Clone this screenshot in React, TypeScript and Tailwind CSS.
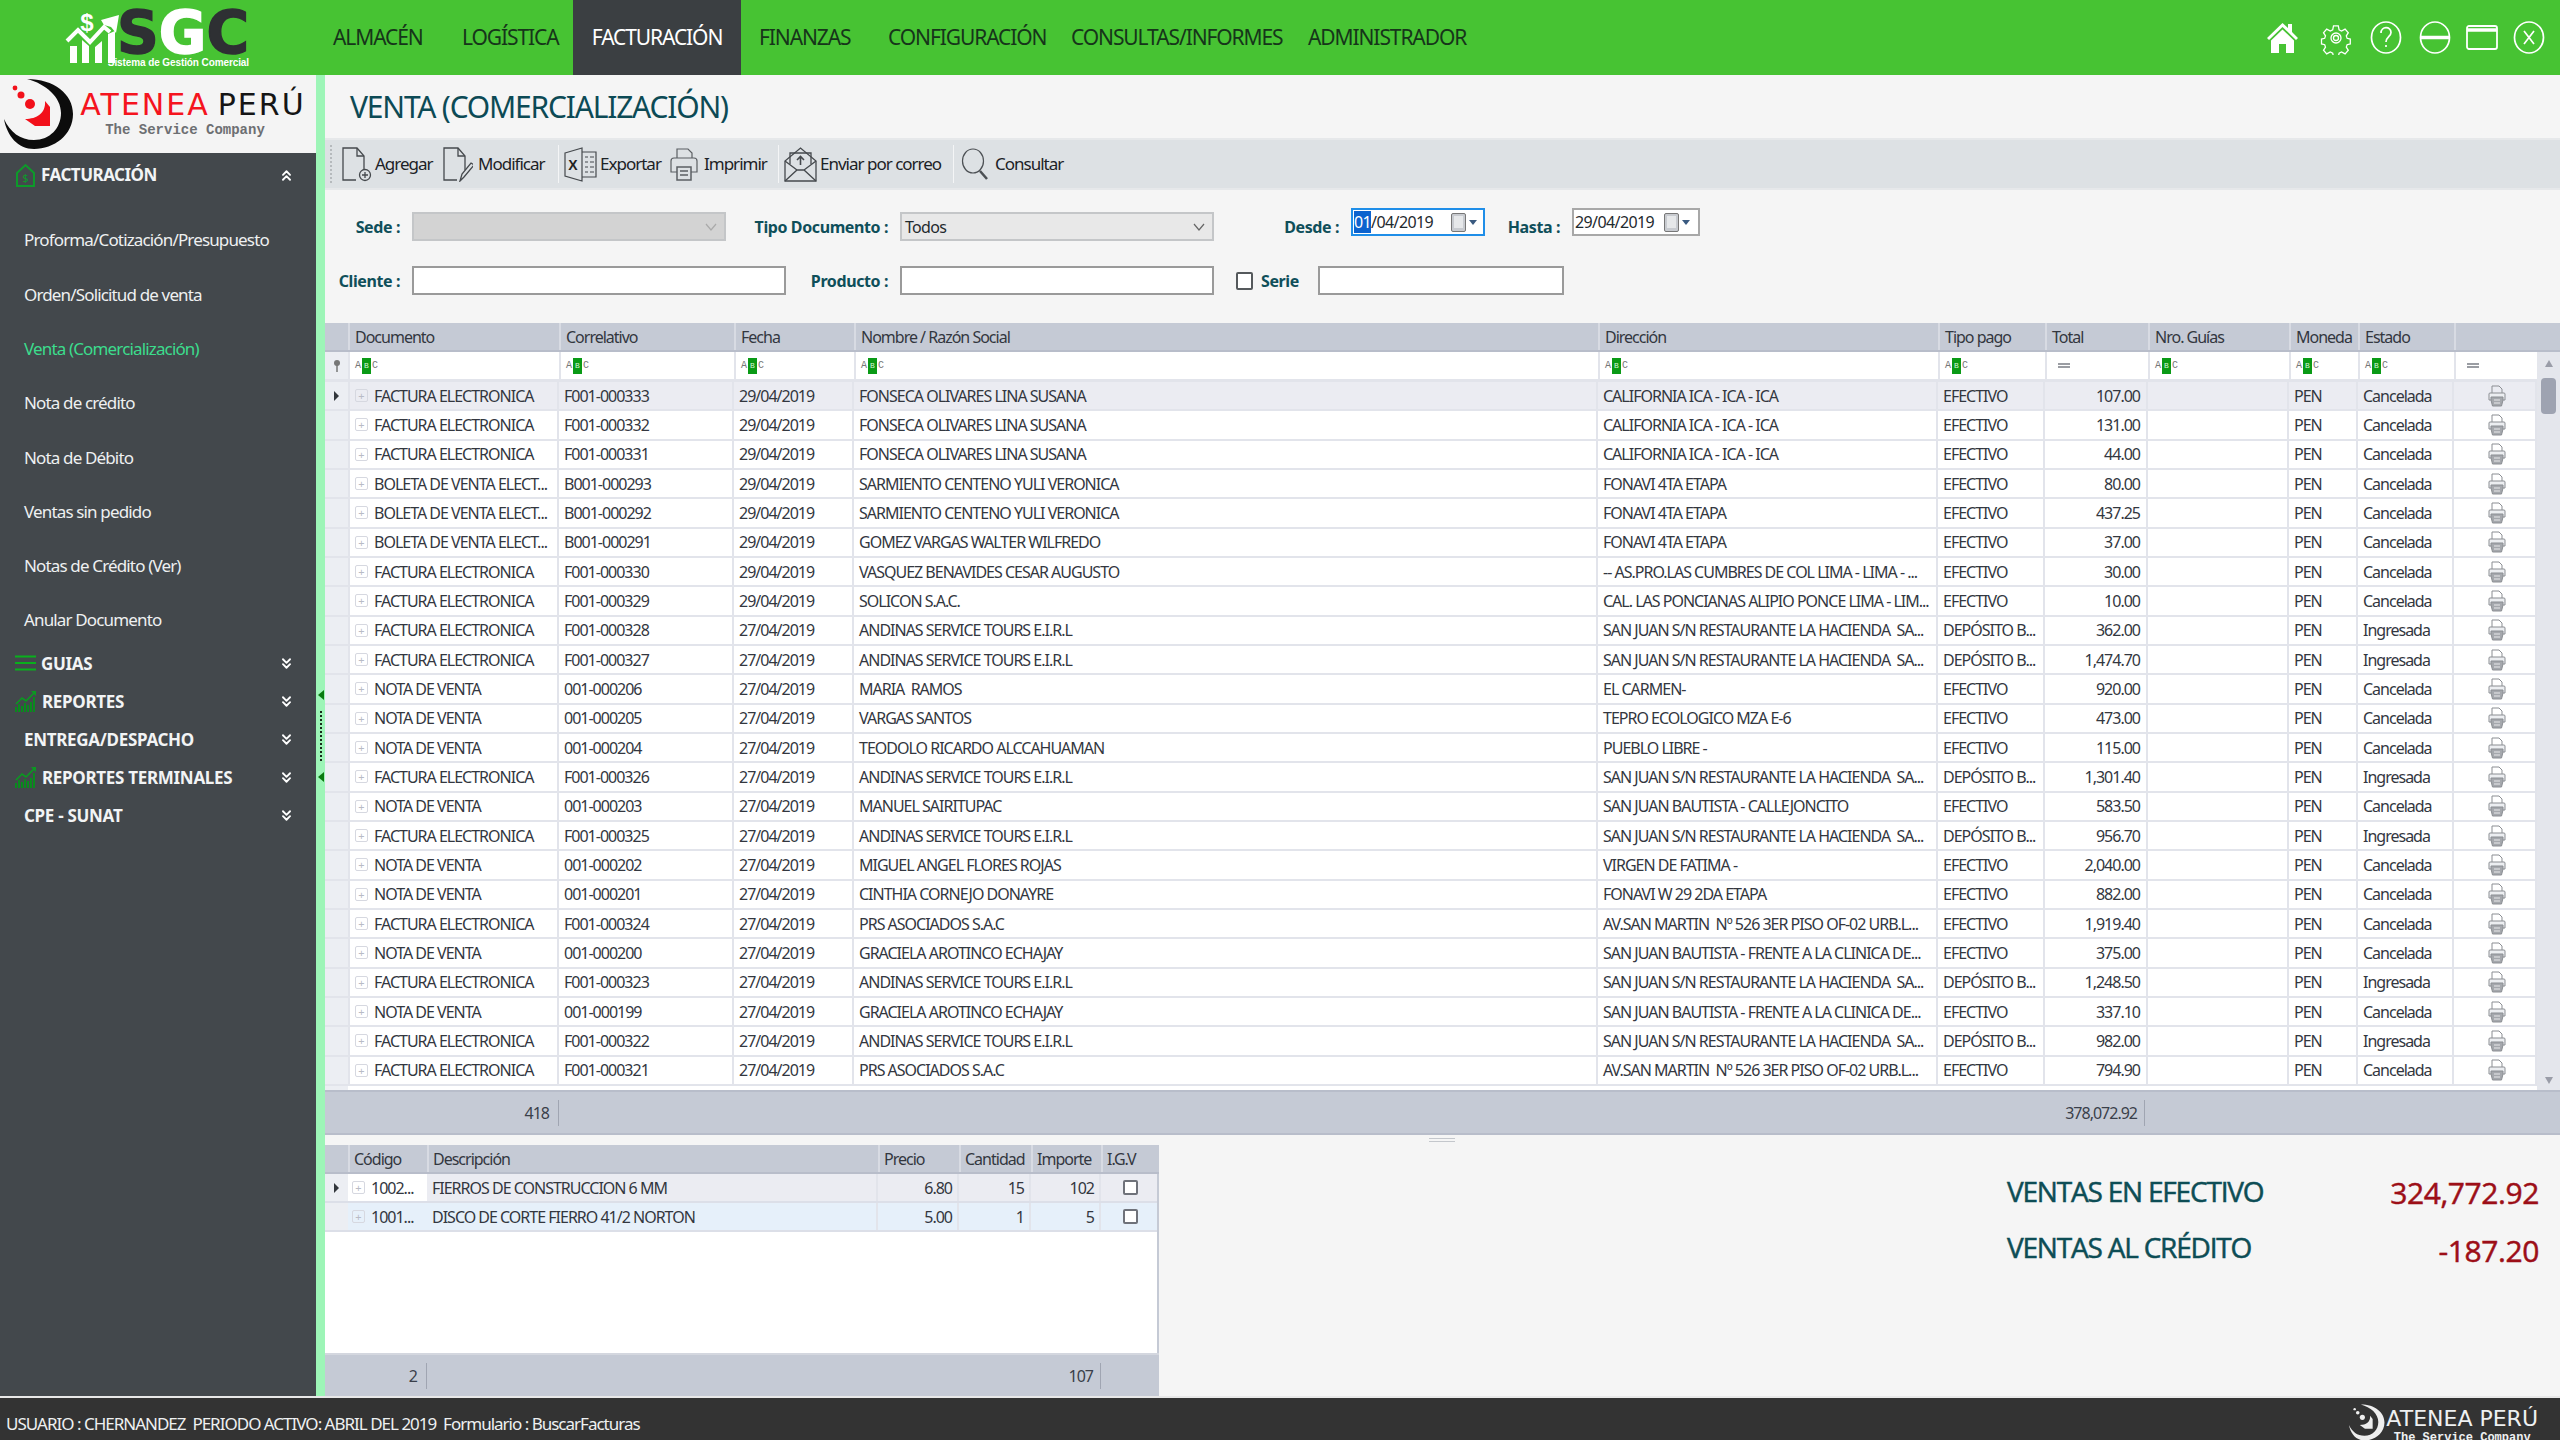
import { ChevronsDown, ChevronsUp } from "lucide-react";

const GRID_COLS =
  "grid grid-cols-[23px_211px_175px_120px_744px_340px_107px_103px_141px_69px_96px_83px]";
const DETAIL_COLS = "grid grid-cols-[23px_79px_451px_81px_72px_70px_58px]";

const FACT = "FACTURA ELECTRONICA";
const BOL = "BOLETA DE VENTA ELECT...";
const NV = "NOTA DE VENTA";
const CA = "CALIFORNIA ICA - ICA - ICA";
const FO = "FONAVI 4TA ETAPA";
const SJ = "SAN JUAN S/N RESTAURANTE LA HACIENDA  SA...";
const AND = "ANDINAS SERVICE TOURS E.I.R.L";
const AV = "AV.SAN MARTIN  Nº 526 3ER PISO OF-02 URB.L...";
const SB = "SAN JUAN BAUTISTA - FRENTE A LA CLINICA DE...";
const EF = "EFECTIVO";
const DB = "DEPÓSITO B...";

const rows = [
  [FACT, "F001-000333", "29/04/2019", "FONSECA OLIVARES LINA SUSANA", CA, EF, "107.00", "Cancelada"],
  [FACT, "F001-000332", "29/04/2019", "FONSECA OLIVARES LINA SUSANA", CA, EF, "131.00", "Cancelada"],
  [FACT, "F001-000331", "29/04/2019", "FONSECA OLIVARES LINA SUSANA", CA, EF, "44.00", "Cancelada"],
  [BOL, "B001-000293", "29/04/2019", "SARMIENTO CENTENO YULI VERONICA", FO, EF, "80.00", "Cancelada"],
  [BOL, "B001-000292", "29/04/2019", "SARMIENTO CENTENO YULI VERONICA", FO, EF, "437.25", "Cancelada"],
  [BOL, "B001-000291", "29/04/2019", "GOMEZ VARGAS WALTER WILFREDO", FO, EF, "37.00", "Cancelada"],
  [FACT, "F001-000330", "29/04/2019", "VASQUEZ BENAVIDES CESAR AUGUSTO", "-- AS.PRO.LAS CUMBRES DE COL LIMA - LIMA - ...", EF, "30.00", "Cancelada"],
  [FACT, "F001-000329", "29/04/2019", "SOLICON S.A.C.", "CAL. LAS PONCIANAS ALIPIO PONCE LIMA - LIM...", EF, "10.00", "Cancelada"],
  [FACT, "F001-000328", "27/04/2019", AND, SJ, DB, "362.00", "Ingresada"],
  [FACT, "F001-000327", "27/04/2019", AND, SJ, DB, "1,474.70", "Ingresada"],
  [NV, "001-000206", "27/04/2019", "MARIA  RAMOS", "EL CARMEN-", EF, "920.00", "Cancelada"],
  [NV, "001-000205", "27/04/2019", "VARGAS SANTOS", "TEPRO ECOLOGICO MZA E-6", EF, "473.00", "Cancelada"],
  [NV, "001-000204", "27/04/2019", "TEODOLO RICARDO ALCCAHUAMAN", "PUEBLO LIBRE -", EF, "115.00", "Cancelada"],
  [FACT, "F001-000326", "27/04/2019", AND, SJ, DB, "1,301.40", "Ingresada"],
  [NV, "001-000203", "27/04/2019", "MANUEL SAIRITUPAC", "SAN JUAN BAUTISTA - CALLEJONCITO", EF, "583.50", "Cancelada"],
  [FACT, "F001-000325", "27/04/2019", AND, SJ, DB, "956.70", "Ingresada"],
  [NV, "001-000202", "27/04/2019", "MIGUEL ANGEL FLORES ROJAS", "VIRGEN DE FATIMA -", EF, "2,040.00", "Cancelada"],
  [NV, "001-000201", "27/04/2019", "CINTHIA CORNEJO DONAYRE", "FONAVI W 29 2DA ETAPA", EF, "882.00", "Cancelada"],
  [FACT, "F001-000324", "27/04/2019", "PRS ASOCIADOS S.A.C", AV, EF, "1,919.40", "Cancelada"],
  [NV, "001-000200", "27/04/2019", "GRACIELA AROTINCO ECHAJAY", SB, EF, "375.00", "Cancelada"],
  [FACT, "F001-000323", "27/04/2019", AND, SJ, DB, "1,248.50", "Ingresada"],
  [NV, "001-000199", "27/04/2019", "GRACIELA AROTINCO ECHAJAY", SB, EF, "337.10", "Cancelada"],
  [FACT, "F001-000322", "27/04/2019", AND, SJ, DB, "982.00", "Ingresada"],
  [FACT, "F001-000321", "27/04/2019", "PRS ASOCIADOS S.A.C", AV, EF, "794.90", "Cancelada"],
];

const subItems = [
  "Proforma/Cotización/Presupuesto",
  "Orden/Solicitud de venta",
  "Venta (Comercialización)",
  "Nota de crédito",
  "Nota de Débito",
  "Ventas sin pedido",
  "Notas de Crédito (Ver)",
  "Anular Documento",
];

function AteneaMark({ arc, accent, width, height }: { arc: string; accent: string; width: number; height: number }) {
  return (
    <svg width={width} height={height} viewBox="0 0 70 72" className="shrink-0">
      <path d="M23 1C50 1 69 16 69 36 69 57 50 71 30 71 14 71 3 58 0 41 6 54 16 62 30 62 46 62 57 50 57 35 57 19 42 6 23 1z" fill={arc} />
      <circle cx="11" cy="10" r="2.400" fill={accent} />
      <circle cx="17" cy="17" r="3.500" fill={accent} />
      <circle cx="26" cy="26" r="5" fill={accent} />
      <path d="M41 23l5 6v19H31l-10-7c12 0 21-6 20-18z" fill={accent} />
    </svg>
  );
}

function ChartIcon() {
  return (
    <svg width="22" height="23" viewBox="0 0 22 23" className="shrink-0">
      <path d="M1 22v-5M4 22v-8M7 22v-6M10 22v-9M13 22v-7M16 22v-10M19 22V7" stroke="#0a8a1e" strokeWidth="2" />
      <path d="M1 14l6-6 4 3 9-9" stroke="#0a9a20" strokeWidth="1.6" fill="none" />
      <path d="M16 1h5v5z" fill="#0a9a20" />
    </svg>
  );
}

function Section({ label, icon }: { label: string; icon?: "bars" | "chart" }) {
  return (
    <div className="flex h-[38px] items-center justify-between pr-[21px] pl-[15px]">
      <div className="flex items-center gap-[5px]">
        {icon === "bars" ? (
          <svg width="21" height="16" viewBox="0 0 21 16" className="shrink-0">
            <path d="M0 1.5h21M0 8h21M0 14.5h21" stroke="#09b01c" strokeWidth="2.2" />
          </svg>
        ) : null}
        {icon === "chart" ? <ChartIcon /> : null}
        <span className={`text-[17px] font-bold tracking-[-0.3px] text-[#f2f4f5] ${icon ? "" : "pl-[9px]"}`}>{label}</span>
      </div>
      <ChevronsDown size={17} strokeWidth={2.6} className="text-white" />
    </div>
  );
}

function Sidebar() {
  return (
    <aside className="flex w-[325px] shrink-0 flex-col border-r-[9px] border-[#9df5b7]">
      <div className="flex h-[78px] shrink-0 items-center bg-[#f4f4f4] pl-[4px]">
        <AteneaMark arc="#0c0c0c" accent="#f2101a" width={70} height={72} />
        <div className="flex w-[238px] flex-col items-center font-['DejaVu_Sans',sans-serif]">
          <div className="flex h-[26px] items-center text-[30px] leading-none tracking-[2px]">
            <span className="text-[#f5141e]">ATENEA</span>
            <span className="ml-[8px] text-[#151515]">PERÚ</span>
          </div>
          <span className="mt-[5px] mr-[16px] font-['Liberation_Mono',monospace] text-[14px] leading-[14px] font-bold tracking-normal text-[#6d6f72]">
            The Service Company
          </span>
        </div>
      </div>
      <nav className="flex flex-1 flex-col bg-[#43484c]">
        <div className="flex h-[44px] shrink-0 items-center justify-between pr-[21px] pl-[15px]">
          <div className="flex items-center gap-[5px]">
            <svg width="21" height="24" viewBox="0 0 21 24" className="shrink-0">
              <path d="M2 10l8.5-8L19 10v13H2z" fill="none" stroke="#0d9a2a" strokeWidth="2" />
              <text x="10.5" y="19" textAnchor="middle" fontSize="11" fill="#0d9a2a">$</text>
            </svg>
            <span className="text-[17px] font-bold tracking-[-0.5px] text-[#f2f4f5]">FACTURACIÓN</span>
          </div>
          <ChevronsUp size={17} strokeWidth={2.6} className="text-white" />
        </div>
        <div className="-mb-[3px] flex flex-col pt-[16px]">
          {subItems.map((item) => (
            <a
              key={item}
              className={`flex h-[54.3px] items-center pl-[24px] text-[17px] tracking-[-0.85px] ${
                item === "Venta (Comercialización)" ? "text-[#3cdc8c]" : "text-[#eef0f1]"
              }`}
            >
              {item}
            </a>
          ))}
        </div>
        <Section label="GUIAS" icon="bars" />
        <Section label="REPORTES" icon="chart" />
        <Section label="ENTREGA/DESPACHO" />
        <Section label="REPORTES TERMINALES" icon="chart" />
        <Section label="CPE - SUNAT" />
      </nav>
    </aside>
  );
}

function Splitter() {
  return (
    <div className="absolute top-[690px] left-[316px] flex h-[92px] w-[9px] flex-col items-center justify-between">
      <div className="h-0 w-0 border-y-[5px] border-r-[6px] border-y-transparent border-r-[#0a7a10]" />
      <div className="h-[50px] w-[2px] border-l-2 border-dotted border-[#1a2a1a]" />
      <div className="h-0 w-0 border-y-[5px] border-r-[6px] border-y-transparent border-r-[#0a7a10]" />
    </div>
  );
}

function HeaderIcons() {
  return (
    <div className="mr-[15px] ml-auto flex items-center">
      <svg width="33" height="33" viewBox="0 0 33 33" className="mr-[20px]">
        <path d="M16.5 2L1 17l2 2 13.500-13L30 19l2-2-6-6V3h-4v4z" fill="#fff" />
        <path d="M5 19.500L16.500 8.500 28 19.500V32h-8v-9h-7v9H5z" fill="#fff" />
      </svg>
      <svg width="34" height="34" viewBox="0 0 34 34" fill="none" stroke="#fff" className="mr-[17px]">
        <path
          d="M14 2h6l1 5 3 1.500 4.500-2.500 4 4.500-2.500 4 1 3 4 1v6l-4 1-1 3 2.500 4-4 4.500-4.500-2.500-3 1.500-1 5h-6l-1-5-3-1.500-4.500 2.500-4-4.500 2.500-4-1-3-4-1v-6l4-1 1-3-2.500-4 4-4.500L10 8.500 13 7z"
          transform="translate(3.300 3.300) scale(.8)"
          strokeWidth="1.6"
        />
        <circle cx="17" cy="17" r="5" strokeWidth="1.3" />
        <circle cx="17" cy="17" r="2.500" strokeWidth="1.3" />
      </svg>
      <svg width="32" height="33" viewBox="0 0 32 33" fill="none" stroke="#fff" strokeWidth="1.7" className="mr-[17px]">
        <ellipse cx="16" cy="16.500" rx="14.500" ry="15.500" />
        <path d="M11 12c0-7 10-7 10-.5 0 4-5 4.500-5 9.500" />
        <path d="M16 24v2" />
      </svg>
      <svg width="32" height="33" viewBox="0 0 32 33" fill="none" stroke="#fff" strokeWidth="1.7" className="mr-[15px]">
        <ellipse cx="16" cy="16.500" rx="14.500" ry="15.500" />
        <path d="M2 16.500h28" strokeWidth="3.500" />
      </svg>
      <svg width="32" height="25" viewBox="0 0 32 25" fill="none" stroke="#fff" className="mr-[15px]">
        <rect x="1" y="1" width="30" height="23" rx="2" strokeWidth="1.800" />
        <path d="M1 5h30" strokeWidth="3.500" />
      </svg>
      <svg width="32" height="33" viewBox="0 0 32 33" fill="none" stroke="#fff" strokeWidth="1.7">
        <ellipse cx="16" cy="16.500" rx="14.500" ry="15.500" />
        <path d="M11 10l10 13M21 10L11 23" />
      </svg>
    </div>
  );
}

function TopBar() {
  return (
    <header className="flex h-[75px] shrink-0 bg-[#47c333]">
      <div className="flex h-full w-[333px] shrink-0 items-start pl-[65px]">
        <svg width="56" height="56" viewBox="0 0 56 56" className="mt-[9px] shrink-0">
          <path d="M5 54V37h7v17zM17 54V31l7 6v17zM30 54V38l7-6v22zM43 54V25l7-3v32z" fill="#fff" />
          <path d="M2 34l11-11 12 12 14-15 6 5" stroke="#fff" strokeWidth="4" fill="none" transform="translate(0 -2)" />
          <path d="M36 11l18-5-3 18-5-6-7-2z" fill="#fff" />
          <text x="22" y="22" textAnchor="middle" fontSize="24" fontWeight="700" fill="#fff" fontFamily="Liberation Sans">$</text>
        </svg>
        <div className="flex w-[128px] flex-col items-end">
          <div className="mt-[10px] flex h-[47px] font-['DejaVu_Sans',sans-serif] text-[58px] leading-[47px] font-bold [-webkit-text-stroke:1.5px_currentColor]">
            <span className="block h-[47px] text-[#2e3033]">S</span>
            <span className="block h-[47px] text-white">G</span>
            <span className="block h-[47px] text-[#2e3033]">C</span>
          </div>
          <span className="mt-[1px] font-['Liberation_Sans',sans-serif] text-[10px] leading-[10px] font-bold tracking-[-0.1px] whitespace-nowrap text-white">
            Sistema de Gestión Comercial
          </span>
        </div>
      </div>
      <nav className="flex h-full items-center text-[21px] tracking-[-1.1px] text-[#16351a]">
        <span className="w-[129px]">ALMACÉN</span>
        <span className="w-[111px]">LOGÍSTICA</span>
        <span className="flex h-full w-[168px] items-center justify-center bg-[#3b3f42] text-white">FACTURACIÓN</span>
        <span className="ml-[18px] w-[129px]">FINANZAS</span>
        <span className="w-[183px]">CONFIGURACIÓN</span>
        <span className="w-[237px]">CONSULTAS/INFORMES</span>
        <span>ADMINISTRADOR</span>
      </nav>
      <HeaderIcons />
    </header>
  );
}

function DocIcon({ badge }: { badge: "plus" | "pen" }) {
  return (
    <svg width="30" height="35" viewBox="0 0 30 35" fill="none" stroke="#45494d" strokeWidth="1.3" className="shrink-0">
      <path d="M14 33H1V1h14l7 8v14" />
      <path d="M15 1v8h7" />
      {badge === "plus" ? (
        <>
          <circle cx="23" cy="28" r="5.500" />
          <path d="M23 25v6M20 28h6" />
        </>
      ) : (
        <path d="M18 33l-1 1 2-7 9-11 3 2-10 12z" />
      )}
    </svg>
  );
}

function ToolText({ children, width }: { children: string; width: string }) {
  return <span className={`text-[17px] tracking-[-1px] whitespace-nowrap text-[#1c2226] ${width}`}>{children}</span>;
}

function Toolbar() {
  return (
    <div className="flex h-[52px] shrink-0 items-center border-y-2 border-[#e6e8ea] bg-[#dde1e4] pl-[5px]">
      <div className="mr-[10px] h-[38px] w-0 border-l-2 border-dotted border-[#b6babd]" />
      <DocIcon badge="plus" />
      <ToolText width="ml-[3px] w-[68px]">Agregar</ToolText>
      <DocIcon badge="pen" />
      <ToolText width="ml-[5px] w-[80px]">Modificar</ToolText>
      <div className="mr-[5px] h-[38px] w-[1px] bg-[#f4f5f6]" />
      <svg width="33" height="35" viewBox="0 0 33 35" fill="none" stroke="#45494d" strokeWidth="1.200" className="shrink-0">
        <path d="M1 6l17-5v33L1 29z" />
        <path d="M18 5h14v25H18M21 10h3M26 10h4M21 15h3M26 15h4M21 20h3M26 20h4M21 25h3M26 25h4" />
        <text x="9" y="23" textAnchor="middle" fontSize="14" fill="#222" stroke="none" fontWeight="700" fontFamily="Liberation Sans">X</text>
      </svg>
      <ToolText width="ml-[3px] w-[69px]">Exportar</ToolText>
      <svg width="30" height="33" viewBox="0 0 30 33" fill="none" stroke="#5b5f63" strokeWidth="1.200" className="shrink-0">
        <path d="M8 10V1h11l4 4v5M8 24H2V13c0-2 1-3 3-3h20c2 0 3 1 3 3v11h-6" />
        <path d="M8 19h14v13H8zM11 23h8M11 27h8" strokeWidth="1.500" />
      </svg>
      <ToolText width="ml-[5px] w-[74px]">Imprimir</ToolText>
      <div className="mr-[5px] h-[38px] w-[1px] bg-[#f4f5f6]" />
      <svg width="33" height="35" viewBox="0 0 33 35" fill="none" stroke="#45494d" strokeWidth="1.300" className="shrink-0">
        <path d="M1 14v20h31V14L16.500 1z" />
        <path d="M1 34l12-11h7l12 11M1 14l12 9M32 14l-12 9" />
        <path d="M6 17V6h21v11" />
        <path d="M16.500 18v-8M13 13l3.500-3.500L20 13" strokeWidth="1.600" />
      </svg>
      <ToolText width="ml-[3px] w-[133px]">Enviar por correo</ToolText>
      <div className="mr-[7px] h-[38px] w-[1px] bg-[#f4f5f6]" />
      <svg width="28" height="32" viewBox="0 0 28 32" fill="none" stroke="#4c5054" className="shrink-0">
        <ellipse cx="12" cy="13" rx="10.500" ry="12" strokeWidth="1.200" />
        <path d="M19 23l7 8" strokeWidth="2.500" />
      </svg>
      <ToolText width="ml-[6px]">Consultar</ToolText>
    </div>
  );
}

function FieldLabel({ children, width }: { children: string; width: string }) {
  return (
    <label className={`shrink-0 pr-[12px] text-right text-[16px] font-bold tracking-[-0.4px] whitespace-nowrap text-[#0f4f5a] ${width}`}>
      {children}
    </label>
  );
}

function ComboBox({ value, width, disabled }: { value?: string; width: string; disabled?: boolean }) {
  return (
    <div
      className={`flex h-[29px] shrink-0 items-center justify-between border-2 border-[#c4c6c8] px-[3px] text-[16px] tracking-[-0.7px] text-[#1f2a2e] ${width} ${
        disabled ? "bg-[#d3d3d3]" : "bg-[#e8e8e8]"
      }`}
    >
      <span>{value}</span>
      <svg width="12" height="8" viewBox="0 0 12 8" fill="none" stroke={disabled ? "#aaa" : "#666"} strokeWidth="1.200" className="mr-[4px]">
        <path d="M1 1l5 6 5-6" />
      </svg>
    </div>
  );
}

function DateBox({ children, focused }: { children: React.ReactNode; focused?: boolean }) {
  return (
    <div
      className={`mb-[9px] flex h-[28px] shrink-0 items-center bg-white pl-[1px] text-[16px] tracking-[-0.6px] text-[#1f2a2e] ${
        focused ? "w-[134px] border-2 border-[#1f8ee8]" : "w-[128px] border-2 border-[#a8a8a8]"
      }`}
    >
      <span className="w-[80px] shrink-0">{children}</span>
      <svg width="15" height="19" viewBox="0 0 15 19" className={`shrink-0 ${focused ? "ml-[17px]" : "ml-[9px]"}`}>
        <rect x=".5" y=".5" width="14" height="18" rx="1.500" fill="#c8cbd0" stroke="#777" />
        <rect x="3" y="3" width="9" height="12" fill="#e6e8ea" />
      </svg>
      <div className="ml-[3px] h-0 w-0 border-x-[4px] border-t-[5px] border-x-transparent border-t-[#3a5a80]" />
    </div>
  );
}

function TextInput({ width }: { width: string }) {
  return <div className={`h-[29px] shrink-0 border-2 border-[#9a9a9a] bg-white ${width}`} />;
}

function Filters() {
  return (
    <div className="flex h-[133px] shrink-0 flex-col gap-[25px] pt-[22px]">
      <div className="flex h-[29px] items-center">
        <FieldLabel width="w-[87px]">Sede :</FieldLabel>
        <ComboBox disabled width="w-[314px]" />
        <FieldLabel width="w-[174px]">Tipo Documento :</FieldLabel>
        <ComboBox value="Todos" width="w-[314px]" />
        <FieldLabel width="w-[137px]">Desde :</FieldLabel>
        <DateBox focused>
          <span className="bg-[#0c63ce] text-white">01</span>/04/2019
        </DateBox>
        <FieldLabel width="w-[87px]">Hasta :</FieldLabel>
        <DateBox>29/04/2019</DateBox>
      </div>
      <div className="flex h-[29px] items-center">
        <FieldLabel width="w-[87px]">Cliente :</FieldLabel>
        <TextInput width="w-[374px]" />
        <FieldLabel width="w-[114px]">Producto :</FieldLabel>
        <TextInput width="w-[314px]" />
        <div className="ml-[22px] h-[18px] w-[17px] shrink-0 rounded-[2px] border-2 border-[#55595c] bg-white" />
        <label className="ml-[8px] w-[57px] shrink-0 text-[16px] font-bold tracking-[-0.4px] text-[#0f4f5a]">Serie</label>
        <TextInput width="w-[246px]" />
      </div>
    </div>
  );
}

function AbcIcon() {
  return (
    <span className="flex items-center font-['Liberation_Mono',monospace] text-[10px] leading-none tracking-normal text-[#777]">
      A
      <span className="mx-[1px] flex h-[16px] w-[9px] items-center justify-center bg-[#0a9a16] text-[8px] text-[#d5f5d5]">B</span>
      C
    </span>
  );
}

function EqIcon() {
  return <span className="ml-[6px] h-[5px] w-[12px] border-y-2 border-[#9a9da3]" />;
}

function PrinterCell() {
  return (
    <svg width="18" height="22" viewBox="0 0 18 22" fill="none" stroke="#8b8e93" strokeWidth="1" className="mx-auto">
      <path d="M4 8V1h7l3 3v4" />
      <path d="M3 15H1V9c0-.7.4-1 1-1h14c.6 0 1 .3 1 1v6h-2" fill="#eceef1" />
      <path d="M3 12h12v3l-1.500 6h-9L3 15z" fill="#a5a8ad" />
      <path d="M6 15h6M6 18h6" stroke="#e8e8ea" />
    </svg>
  );
}

function PlusBox() {
  return (
    <span className="mr-[6px] flex h-[13px] w-[13px] shrink-0 items-center justify-center rounded-[2px] border border-[#d6d8e0] text-[11px] leading-none tracking-normal text-[#b8bbc5]">
      +
    </span>
  );
}

function Arrow() {
  return <div className="h-0 w-0 border-y-[5px] border-l-[5px] border-y-transparent border-l-[#33373d]" />;
}

const cell = "flex items-center overflow-hidden border-r-2 border-[#e2e4eb] pl-[5px] whitespace-pre";

function MainGrid() {
  const headers = ["Documento", "Correlativo", "Fecha", "Nombre / Razón Social", "Dirección", "Tipo pago", "Total", "Nro. Guías", "Moneda", "Estado", ""];
  return (
    <div className="flex min-h-0 flex-1 flex-col bg-white text-[16px] tracking-[-1px] text-[#33373f]">
      <div className={`${GRID_COLS} h-[29px] shrink-0 border-b-2 border-[#b8bdca] bg-[#c5cad5] pr-[23px]`}>
        <div />
        {headers.map((h) => (
          <div key={h || "print"} className="flex items-center border-l-2 border-[#d8dbe3] pl-[5px]">
            {h}
          </div>
        ))}
      </div>
      <div className="relative flex min-h-0 flex-1 flex-col overflow-hidden pr-[23px]">
        <div className={`${GRID_COLS} h-[30px] shrink-0 border-b-[3px] border-[#e2e4eb]`}>
          <div className="flex items-center justify-center bg-[#eceef3]">
            <svg width="8" height="13" viewBox="0 0 8 13">
              <circle cx="4" cy="4" r="3" fill="#777" />
              <path d="M4 6v7" stroke="#777" strokeWidth="1.500" />
            </svg>
          </div>
          {headers.map((h) => (
            <div key={h || "print"} className="flex items-center border-l-2 border-[#e2e4eb] pl-[5px]">
              {h === "Total" || h === "" ? <EqIcon /> : <AbcIcon />}
            </div>
          ))}
        </div>
        {rows.map((row, i) => (
          <div key={row[1]} className={`${GRID_COLS} h-[29.33px] shrink-0 border-b-2 border-[#e2e4eb] ${i === 0 ? "bg-[#ebecf2]" : ""}`}>
            <div className="flex items-center justify-center bg-[#eceef3]">{i === 0 ? <Arrow /> : null}</div>
            <div className={`${cell} border-l-2 pl-[2px]`}>
              <PlusBox />
              {row[0]}
            </div>
            <div className={cell}>{row[1]}</div>
            <div className={cell}>{row[2]}</div>
            <div className={cell}>{row[3]}</div>
            <div className={cell}>{row[4]}</div>
            <div className={cell}>{row[5]}</div>
            <div className={`${cell} justify-end pr-[6px]`}>{row[6]}</div>
            <div className={cell} />
            <div className={cell}>PEN</div>
            <div className={cell}>{row[7]}</div>
            <div className={cell}>
              <PrinterCell />
            </div>
          </div>
        ))}
        <div className={`${GRID_COLS} h-[29px] shrink-0`}>
          <div className="bg-[#eceef3]" />
        </div>
        <div className="absolute top-0 right-0 bottom-0 flex w-[23px] flex-col items-center bg-[#e4e6ec] pt-[8px] pb-[6px]">
          <div className="h-0 w-0 border-x-[4px] border-b-[7px] border-x-transparent border-b-[#9a9da8]" />
          <div className="mt-[11px] h-[36px] w-[15px] rounded-[4px] bg-[#9ea3b1]" />
          <div className="mt-auto h-0 w-0 border-x-[4px] border-t-[7px] border-x-transparent border-t-[#9a9da8]" />
        </div>
      </div>
      <div className="flex h-[45px] shrink-0 items-center border-y-2 border-[#b8bdca] bg-[#c5cad5] text-[#3a3f4a]">
        <div className="flex h-[26px] w-[234px] items-center justify-end border-r border-[#a0a5b2] pr-[9px]">418</div>
        <div className="flex h-[26px] w-[1586px] items-center justify-end border-r border-[#a0a5b2] pr-[7px]">378,072.92</div>
      </div>
    </div>
  );
}

function DetailGrid() {
  const headers = ["Código", "Descripción", "Precio", "Cantidad", "Importe", "I.G.V"];
  const items = [
    ["1002...", "FIERROS DE CONSTRUCCION 6 MM", "6.80", "15", "102"],
    ["1001...", "DISCO DE CORTE FIERRO 41/2 NORTON", "5.00", "1", "5"],
  ];
  return (
    <div className="flex w-[834px] shrink-0 flex-col bg-white text-[16px] tracking-[-1px] text-[#33373f]">
      <div className={`${DETAIL_COLS} h-[29px] shrink-0 border-b-2 border-[#b8bdca] bg-[#c5cad5]`}>
        <div />
        {headers.map((h) => (
          <div key={h} className="flex items-center border-l-2 border-[#d8dbe3] pl-[4px]">
            {h}
          </div>
        ))}
      </div>
      <div className="flex min-h-0 flex-1 flex-col border-r-2 border-[#c5cad5]">
        {items.map((it, i) => (
          <div key={it[0]} className={`${DETAIL_COLS} h-[29px] shrink-0 border-b-2 border-[#dcdfe8] ${i === 0 ? "bg-[#ebecf2]" : "bg-[#e6f0fa]"}`}>
            <div className="flex items-center justify-center bg-[#eceef3]">{i === 0 ? <Arrow /> : null}</div>
            <div className={`flex items-center pl-[4px] ${i === 0 ? "bg-white" : ""}`}>
              <PlusBox />
              {it[0]}
            </div>
            <div className={cell}>{it[1]}</div>
            <div className={`${cell} justify-end pr-[5px]`}>{it[2]}</div>
            <div className={`${cell} justify-end pr-[5px]`}>{it[3]}</div>
            <div className={`${cell} justify-end pr-[5px]`}>{it[4]}</div>
            <div className="flex items-center justify-center">
              <div className="h-[15px] w-[15px] rounded-[2px] border-2 border-[#6f727a] bg-white" />
            </div>
          </div>
        ))}
      </div>
      <div className="flex h-[43px] shrink-0 items-center border-t-2 border-[#d4d7df] bg-[#c5cad5] text-[#3a3f4a]">
        <div className="flex h-[26px] w-[102px] items-center justify-end border-r border-[#a0a5b2] pr-[9px]">2</div>
        <div className="flex h-[26px] w-[674px] items-center justify-end border-r border-[#a0a5b2] pr-[7px]">107</div>
      </div>
    </div>
  );
}

function Summary() {
  return (
    <div className="flex flex-1 flex-col pt-[18px] pr-[21px] pl-[848px] font-['Open_Sans',sans-serif]">
      <div className="flex h-[56px] items-center justify-between">
        <span className="text-[28px] tracking-[-1.2px] text-[#0d4d55] [-webkit-text-stroke:0.5px_currentColor]">VENTAS EN EFECTIVO</span>
        <span className="mt-[3px] text-[30px] tracking-[-0.4px] text-[#9c0e17] [-webkit-text-stroke:0.5px_currentColor]">324,772.92</span>
      </div>
      <div className="flex h-[56px] items-center justify-between">
        <span className="text-[28px] tracking-[-1.2px] text-[#0d4d55] [-webkit-text-stroke:0.5px_currentColor]">VENTAS AL CRÉDITO</span>
        <span className="mt-[6px] text-[30px] tracking-[-0.4px] text-[#9c0e17] [-webkit-text-stroke:0.5px_currentColor]">-187.20</span>
      </div>
    </div>
  );
}

function StatusBar() {
  return (
    <footer className="flex h-[44px] shrink-0 items-center overflow-hidden border-t-2 border-[#e8e8e8] bg-[#333333] pl-[6px] text-[17px] tracking-[-1px] whitespace-pre text-[#eef0f1]">
      <span className="mt-[9px]">USUARIO : CHERNANDEZ  PERIODO ACTIVO: ABRIL DEL 2019  Formulario : BuscarFacturas</span>
      <div className="mr-[22px] ml-auto flex h-full items-start pt-[6px]">
        <AteneaMark arc="#eeeeee" accent="#eeeeee" width={36} height={37} />
        <div className="ml-[1px] flex flex-col items-center font-['DejaVu_Sans',sans-serif] tracking-normal">
          <span className="mt-[2px] text-[22px] leading-[26px]">ATENEA PERÚ</span>
          <span className="font-['Liberation_Mono',monospace] text-[12px] leading-[12px] font-bold">The Service Company</span>
        </div>
      </div>
    </footer>
  );
}

export default function App() {
  return (
    <div className="relative flex h-[1440px] w-[2560px] flex-col overflow-hidden bg-[#f5f5f5] font-['Noto_Sans',sans-serif]">
      <TopBar />
      <div className="flex min-h-0 flex-1">
        <Sidebar />
        <main className="flex min-w-0 flex-1 flex-col">
          <h1 className="flex h-[63px] shrink-0 items-center pl-[25px] text-[30px] tracking-[-1.2px] text-[#0c4a55]">
            VENTA (COMERCIALIZACIÓN)
          </h1>
          <Toolbar />
          <Filters />
          <MainGrid />
          <div className="flex h-[10px] shrink-0 items-center pl-[1104px]">
            <div className="h-[4px] w-[26px] border-y border-[#c4c7cc]" />
          </div>
          <div className="flex h-[251px] shrink-0">
            <DetailGrid />
            <Summary />
          </div>
        </main>
      </div>
      <StatusBar />
      <Splitter />
    </div>
  );
}
